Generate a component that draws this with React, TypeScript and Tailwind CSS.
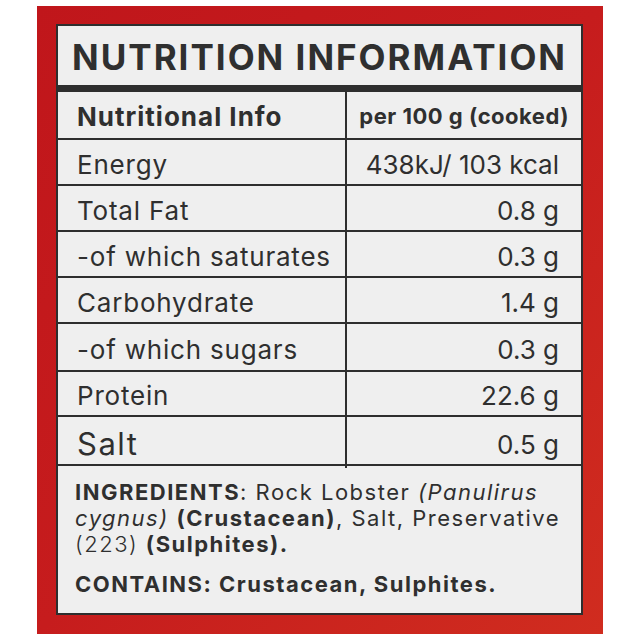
const rows = [
  { label: "Energy", value: "438kJ/ 103 kcal", h: "h-[46px]", size: "text-[26px] tracking-[0.8px]" },
  { label: "Total Fat", value: "0.8 g", h: "h-[46px]", size: "text-[26px] tracking-[0.8px]" },
  { label: "-of which saturates", value: "0.3 g", h: "h-[46px]", size: "text-[26px] tracking-[0.8px]" },
  { label: "Carbohydrate", value: "1.4 g", h: "h-[46px]", size: "text-[26px] tracking-[0.8px]" },
  { label: "-of which sugars", value: "0.3 g", h: "h-[48px]", size: "text-[26px] tracking-[0.8px]" },
  { label: "Protein", value: "22.6 g", h: "h-[45px]", size: "text-[26px] tracking-[0.8px]" },
  { label: "Salt", value: "0.5 g", h: "h-[49px]", size: "text-[31px] tracking-[1.5px]" },
];

const App = () => {
  return (
    <div
      className="w-[640px] h-[640px] bg-white pl-[37px] pt-[6px]"
      style={{ fontFamily: "Inter, 'Open Sans', sans-serif" }}
    >
      <div className="w-[566px] h-[628px] bg-gradient-to-br from-[#c0161b] via-[#c61c1d] to-[#d02c1f] pt-[18px] pl-[19px] pb-[19px] pr-[20px]">
        <div className="h-full bg-[#efefef] border-2 border-[#2e2e2e] flex flex-col text-[#2f2f2f] overflow-hidden">
          {/* Title */}
          <div className="h-[59px] shrink-0 flex items-center justify-center pt-[3px]">
            <h1 className="text-[35px] font-bold tracking-[2px] leading-none whitespace-nowrap">
              NUTRITION INFORMATION
            </h1>
          </div>
          <div className="h-[7px] shrink-0 bg-[#2e2e2e]" />

          {/* Table */}
          <div className="grid grid-cols-[289px_1fr] h-[48px] shrink-0 border-b-2 border-[#2e2e2e]">
            <div className="flex items-center pl-[19px] pt-[3px] border-r-2 border-[#2e2e2e] text-[26px] tracking-[1px] font-bold">
              Nutritional Info
            </div>
            <div className="flex items-center justify-end pr-[12px] pt-[3px] text-[22px] tracking-[0.5px] font-bold">
              per 100 g (cooked)
            </div>
          </div>
          {rows.map((r) => (
            <div
              key={r.label}
              className={`grid grid-cols-[289px_1fr] shrink-0 border-b-2 border-[#2e2e2e] ${r.h}`}
            >
              <div className={`flex items-center pl-[19px] pt-[4px] border-r-2 border-[#2e2e2e] ${r.size}`}>
                {r.label}
              </div>
              <div className="flex items-center justify-end pr-[22px] pt-[4px] text-[26px]">
                {r.value}
              </div>
            </div>
          ))}

          {/* Ingredients */}
          <div className="px-[17px] pt-[13px] text-[22px] leading-[26px] tracking-[1.5px] whitespace-nowrap">
            <p>
              <span className="font-bold">INGREDIENTS</span>: Rock Lobster{" "}
              <span className="italic">(Panulirus</span>
              <br />
              <span className="italic">cygnus)</span>{" "}
              <span className="font-bold">(Crustacean)</span>, Salt, Preservative
              <br />
              <span className="font-light">(223)</span>{" "}
              <span className="font-bold">(Sulphites).</span>
            </p>
            <p className="mt-[14px] font-bold">CONTAINS: Crustacean, Sulphites.</p>
          </div>
        </div>
      </div>
    </div>
  );
};

export default App;
